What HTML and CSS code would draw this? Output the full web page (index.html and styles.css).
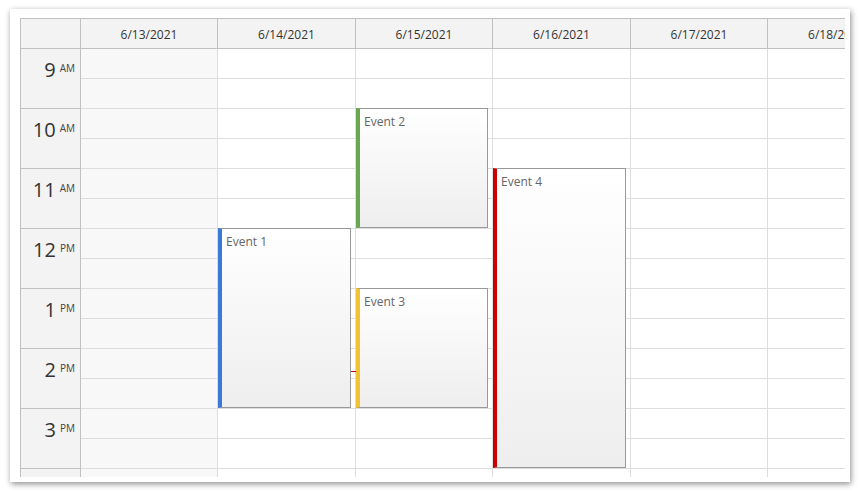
FILE: index.html
```html
<!DOCTYPE html>
<html>
<head>
<meta charset="utf-8">
<link rel="stylesheet" href="styles.css">
</head>
<body>
<div class="panel">
  <div class="viewport">
    <div class="header">
      <div class="corner"></div>
      <div class="hcell w137">6/13/2021</div>
      <div class="hcell w138">6/14/2021</div>
      <div class="hcell w137">6/15/2021</div>
      <div class="hcell w138">6/16/2021</div>
      <div class="hcell w137">6/17/2021</div>
      <div class="hcell w138">6/18/2021</div>
    </div>
    <div class="body">
      <div class="times">
        <div class="hour"><span class="h">9</span><span class="ap">AM</span></div>
        <div class="hour"><span class="h">10</span><span class="ap">AM</span></div>
        <div class="hour"><span class="h">11</span><span class="ap">AM</span></div>
        <div class="hour"><span class="h">12</span><span class="ap">PM</span></div>
        <div class="hour"><span class="h">1</span><span class="ap">PM</span></div>
        <div class="hour"><span class="h">2</span><span class="ap">PM</span></div>
        <div class="hour"><span class="h">3</span><span class="ap">PM</span></div>
        <div class="hour"></div>
      </div>
      <div class="col w137 off">
        <div class="slot"></div><div class="slot"></div><div class="slot"></div><div class="slot"></div>
        <div class="slot"></div><div class="slot"></div><div class="slot"></div><div class="slot"></div>
        <div class="slot"></div><div class="slot"></div><div class="slot"></div><div class="slot"></div>
        <div class="slot"></div><div class="slot"></div><div class="slot"></div><div class="slot"></div>
      </div>
      <div class="col w138">
        <div class="slot"></div><div class="slot"></div><div class="slot"></div><div class="slot"></div>
        <div class="slot"></div><div class="slot"></div><div class="slot"></div><div class="slot"></div>
        <div class="slot"></div><div class="slot"></div><div class="slot"></div><div class="slot"></div>
        <div class="slot"></div><div class="slot"></div><div class="slot"></div><div class="slot"></div>
        <div class="now"></div>
        <div class="event blue" style="top:179px;height:180px">Event 1</div>
      </div>
      <div class="col w137">
        <div class="slot"></div><div class="slot"></div><div class="slot"></div><div class="slot"></div>
        <div class="slot"></div><div class="slot"></div><div class="slot"></div><div class="slot"></div>
        <div class="slot"></div><div class="slot"></div><div class="slot"></div><div class="slot"></div>
        <div class="slot"></div><div class="slot"></div><div class="slot"></div><div class="slot"></div>
        <div class="event green" style="top:59px;height:120px">Event 2</div>
        <div class="event yellow" style="top:239px;height:120px">Event 3</div>
      </div>
      <div class="col w138">
        <div class="slot"></div><div class="slot"></div><div class="slot"></div><div class="slot"></div>
        <div class="slot"></div><div class="slot"></div><div class="slot"></div><div class="slot"></div>
        <div class="slot"></div><div class="slot"></div><div class="slot"></div><div class="slot"></div>
        <div class="slot"></div><div class="slot"></div><div class="slot"></div><div class="slot"></div>
        <div class="event red" style="top:119px;height:300px">Event 4</div>
      </div>
      <div class="col w137">
        <div class="slot"></div><div class="slot"></div><div class="slot"></div><div class="slot"></div>
        <div class="slot"></div><div class="slot"></div><div class="slot"></div><div class="slot"></div>
        <div class="slot"></div><div class="slot"></div><div class="slot"></div><div class="slot"></div>
        <div class="slot"></div><div class="slot"></div><div class="slot"></div><div class="slot"></div>
      </div>
      <div class="col w138">
        <div class="slot"></div><div class="slot"></div><div class="slot"></div><div class="slot"></div>
        <div class="slot"></div><div class="slot"></div><div class="slot"></div><div class="slot"></div>
        <div class="slot"></div><div class="slot"></div><div class="slot"></div><div class="slot"></div>
        <div class="slot"></div><div class="slot"></div><div class="slot"></div><div class="slot"></div>
      </div>
    </div>
  </div>
</div>
</body>
</html>
```

FILE: styles.css
```css
* { box-sizing: border-box; }
html, body { margin: 0; padding: 0; background: #fff; }
body {
  font-family: "Open Sans", "Noto Sans", sans-serif;
  font-size: 12px;
  width: 860px;
  height: 492px;
  overflow: hidden;
}
.panel {
  margin: 9px 0 0 10px;
  width: 840px;
  height: 473px;
  padding: 9px 5px 5px 10px;
  background: #fff;
  box-shadow: 1px 2px 6px rgba(0, 0, 0, 0.45);
}
.viewport {
  width: 825px;
  height: 459px;
  overflow: hidden;
  border-left: 1px solid #c0c0c0;
  border-top: 1px solid #c0c0c0;
}
.header {
  display: flex;
  width: max-content;
  height: 30px;
  border-bottom: 1px solid #c0c0c0;
  background: #f3f3f3;
}
.corner {
  flex: none;
  width: 60px;
  border-right: 1px solid #c0c0c0;
}
.hcell {
  flex: none;
  border-right: 1px solid #c0c0c0;
  text-align: center;
  line-height: 29px;
  padding-top: 1px;
  color: #333;
}
.w137 { width: 137px; }
.w138 { width: 138px; }
.body {
  display: flex;
  width: max-content;
}
.times {
  flex: none;
  width: 60px;
  background: #f3f3f3;
  border-right: 1px solid #c0c0c0;
}
.hour {
  height: 60px;
  border-bottom: 1px solid #c0c0c0;
  display: flex;
  justify-content: flex-end;
  align-items: flex-start;
  padding: 9px 5px 0 0;
  color: #333;
}
.hour .h {
  font-size: 20px;
  font-weight: 400;
  line-height: 24px;
}
.hour .ap {
  font-size: 10px;
  line-height: 12px;
  margin-left: 4px;
  margin-top: 4px;
  color: #444;
}
.col {
  flex: none;
  position: relative;
  border-right: 1px solid #ddd;
  background: #fff;
}
.col.off { background: #f8f8f8; }
.slot {
  height: 30px;
  border-bottom: 1px solid #ddd;
}
.now {
  position: absolute;
  left: 0;
  right: -2px;
  top: 322px;
  height: 1px;
  background: #cc0000;
  z-index: 1;
}
.event {
  position: absolute;
  left: 0;
  width: 133px;
  border: 1px solid #999;
  border-left-width: 4px;
  background: linear-gradient(#ffffff, #eeeeee);
  color: #666;
  padding: 4px 0 0 4px;
  line-height: 17px;
  z-index: 2;
}
.col.w137 .event { width: 132px; }
.event.blue { border-left-color: #3c78d8; }
.event.green { border-left-color: #6aa84f; }
.event.yellow { border-left-color: #f1c232; }
.event.red { border-left-color: #cc0000; }
```
